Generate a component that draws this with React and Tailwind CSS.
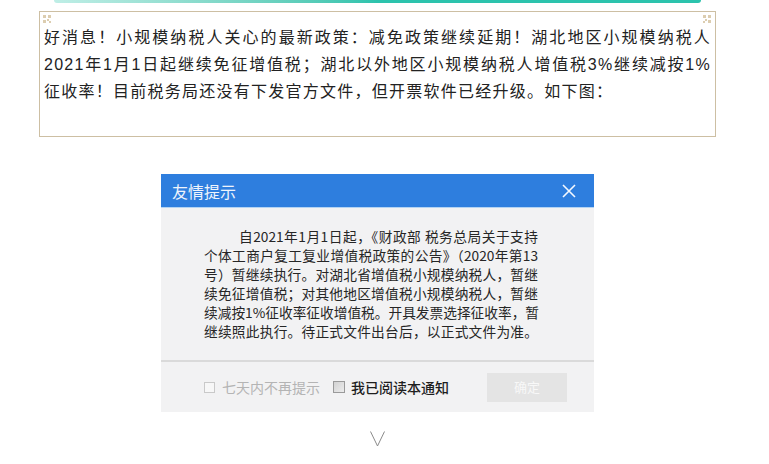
import React from "react";

const topLines = [
  "好消息！小规模纳税人关心的最新政策：减免政策继续延期！湖北地区小规模纳税人",
  "2021年1月1日起继续免征增值税；湖北以外地区小规模纳税人增值税3%继续减按1%",
];

const noticeLines = [
  "个体工商户复工复业增值税政策的公告》（2020年第13",
  "号）暂继续执行。对湖北省增值税小规模纳税人，暂继",
  "续免征增值税；对其他地区增值税小规模纳税人，暂继",
  "续减按1%征收率征收增值税。开具发票选择征收率，暂",
  "继续照此执行。待正式文件出台后，以正式文件为准。",
];

const CornerMark = ({ className }) => (
  <svg viewBox="0 0 8 8" className={className} fill="#dccdb0">
    <rect x="0" y="0" width="3" height="3" />
    <rect x="5" y="0" width="3" height="3" />
    <rect x="0" y="5" width="3" height="3" />
    <rect x="4" y="4" width="2" height="2" />
    <rect x="6" y="6" width="2" height="2" />
  </svg>
);

const App = () => {
  return (
    <div className="w-[769px] h-[464px] bg-white overflow-hidden font-['Liberation_Sans','Noto_Sans_CJK_SC',sans-serif]">
      <div className="ml-[54px] w-[647px] h-[3px] rounded-b-[3px] bg-gradient-to-r from-[#bfeee6] via-[#2cc3ad] to-[#2cc3ad]" />

      <div className="relative ml-[39px] mt-[8px] w-[677px] h-[126px] border border-[#cdbfa3]">
        <CornerMark className="absolute left-[3px] top-[3px] w-[8px] h-[8px]" />
        <CornerMark className="absolute right-[4px] top-[3px] w-[8px] h-[8px] -scale-x-100" />
        <div className="pl-[4px] pr-[4px] pt-[12px] text-[16px] leading-[27px] tracking-[1.25px] text-[#222]">
          {topLines.map((l) => (
            <div key={l} className="text-justify [text-align-last:justify] whitespace-nowrap">
              {l}
            </div>
          ))}
          <div className="whitespace-nowrap">征收率！目前税务局还没有下发官方文件，但开票软件已经升级。如下图：</div>
        </div>
      </div>

      <div className="ml-[161px] mt-[37px] w-[433px] font-['Noto_Sans_CJK_SC',sans-serif]">
        <div className="h-[34px] bg-[#2e7ede] border-b border-[#b3d3f3] flex items-center justify-between pl-[11px] pr-[18px]">
          <span className="text-[16px] text-[#eef4fc]">友情提示</span>
          <svg viewBox="0 0 14 14" className="w-[14px] h-[14px]" stroke="#f4f8ff" strokeWidth="1.6" fill="none">
            <path d="M1 1L13 13M13 1L1 13" />
          </svg>
        </div>
        <div className="bg-[#f2f2f3] pt-[19px] pb-[19px] pl-[43px]">
          <div className="w-[334px] text-[13.7px] leading-[19px] text-[#262626] whitespace-nowrap">
            <div className="pl-[35px] text-justify [text-align-last:justify]">
              自2021年1月1日起，《财政部 税务总局关于支持
            </div>
            {noticeLines.map((l) => (
              <div key={l} className="text-justify [text-align-last:justify]">
                {l}
              </div>
            ))}
          </div>
        </div>
        <div className="bg-[#f2f2f3] border-t-2 border-[#dadada] h-[52px] flex items-center pl-[43px]">
          <span className="w-[11px] h-[11px] border border-[#c9c9c9] bg-[#f7f7f7]" />
          <span className="ml-[7px] text-[14px] text-[#b4b4b4]">七天内不再提示</span>
          <span className="ml-[13px] w-[12px] h-[12px] border border-[#9a9a9a] bg-gradient-to-br from-[#d2d2d2] to-[#ececec]" />
          <span className="ml-[6px] text-[14px] font-medium text-[#1e1e1e]">我已阅读本通知</span>
          <div className="ml-[38px] w-[80px] h-[29px] bg-[#e4e4e4] flex items-center justify-center text-[13px] text-[#f8f8f8]">
            确定
          </div>
        </div>
      </div>

      <div className="flex justify-center ml-[-14px] mt-[19px]">
        <svg viewBox="0 0 15 16" className="w-[15px] h-[16px]" stroke="#8a8a8a" strokeWidth="1" fill="none">
          <path d="M0.5 0.5L7.5 15L14.5 0.5" />
        </svg>
      </div>
    </div>
  );
};

export default App;
